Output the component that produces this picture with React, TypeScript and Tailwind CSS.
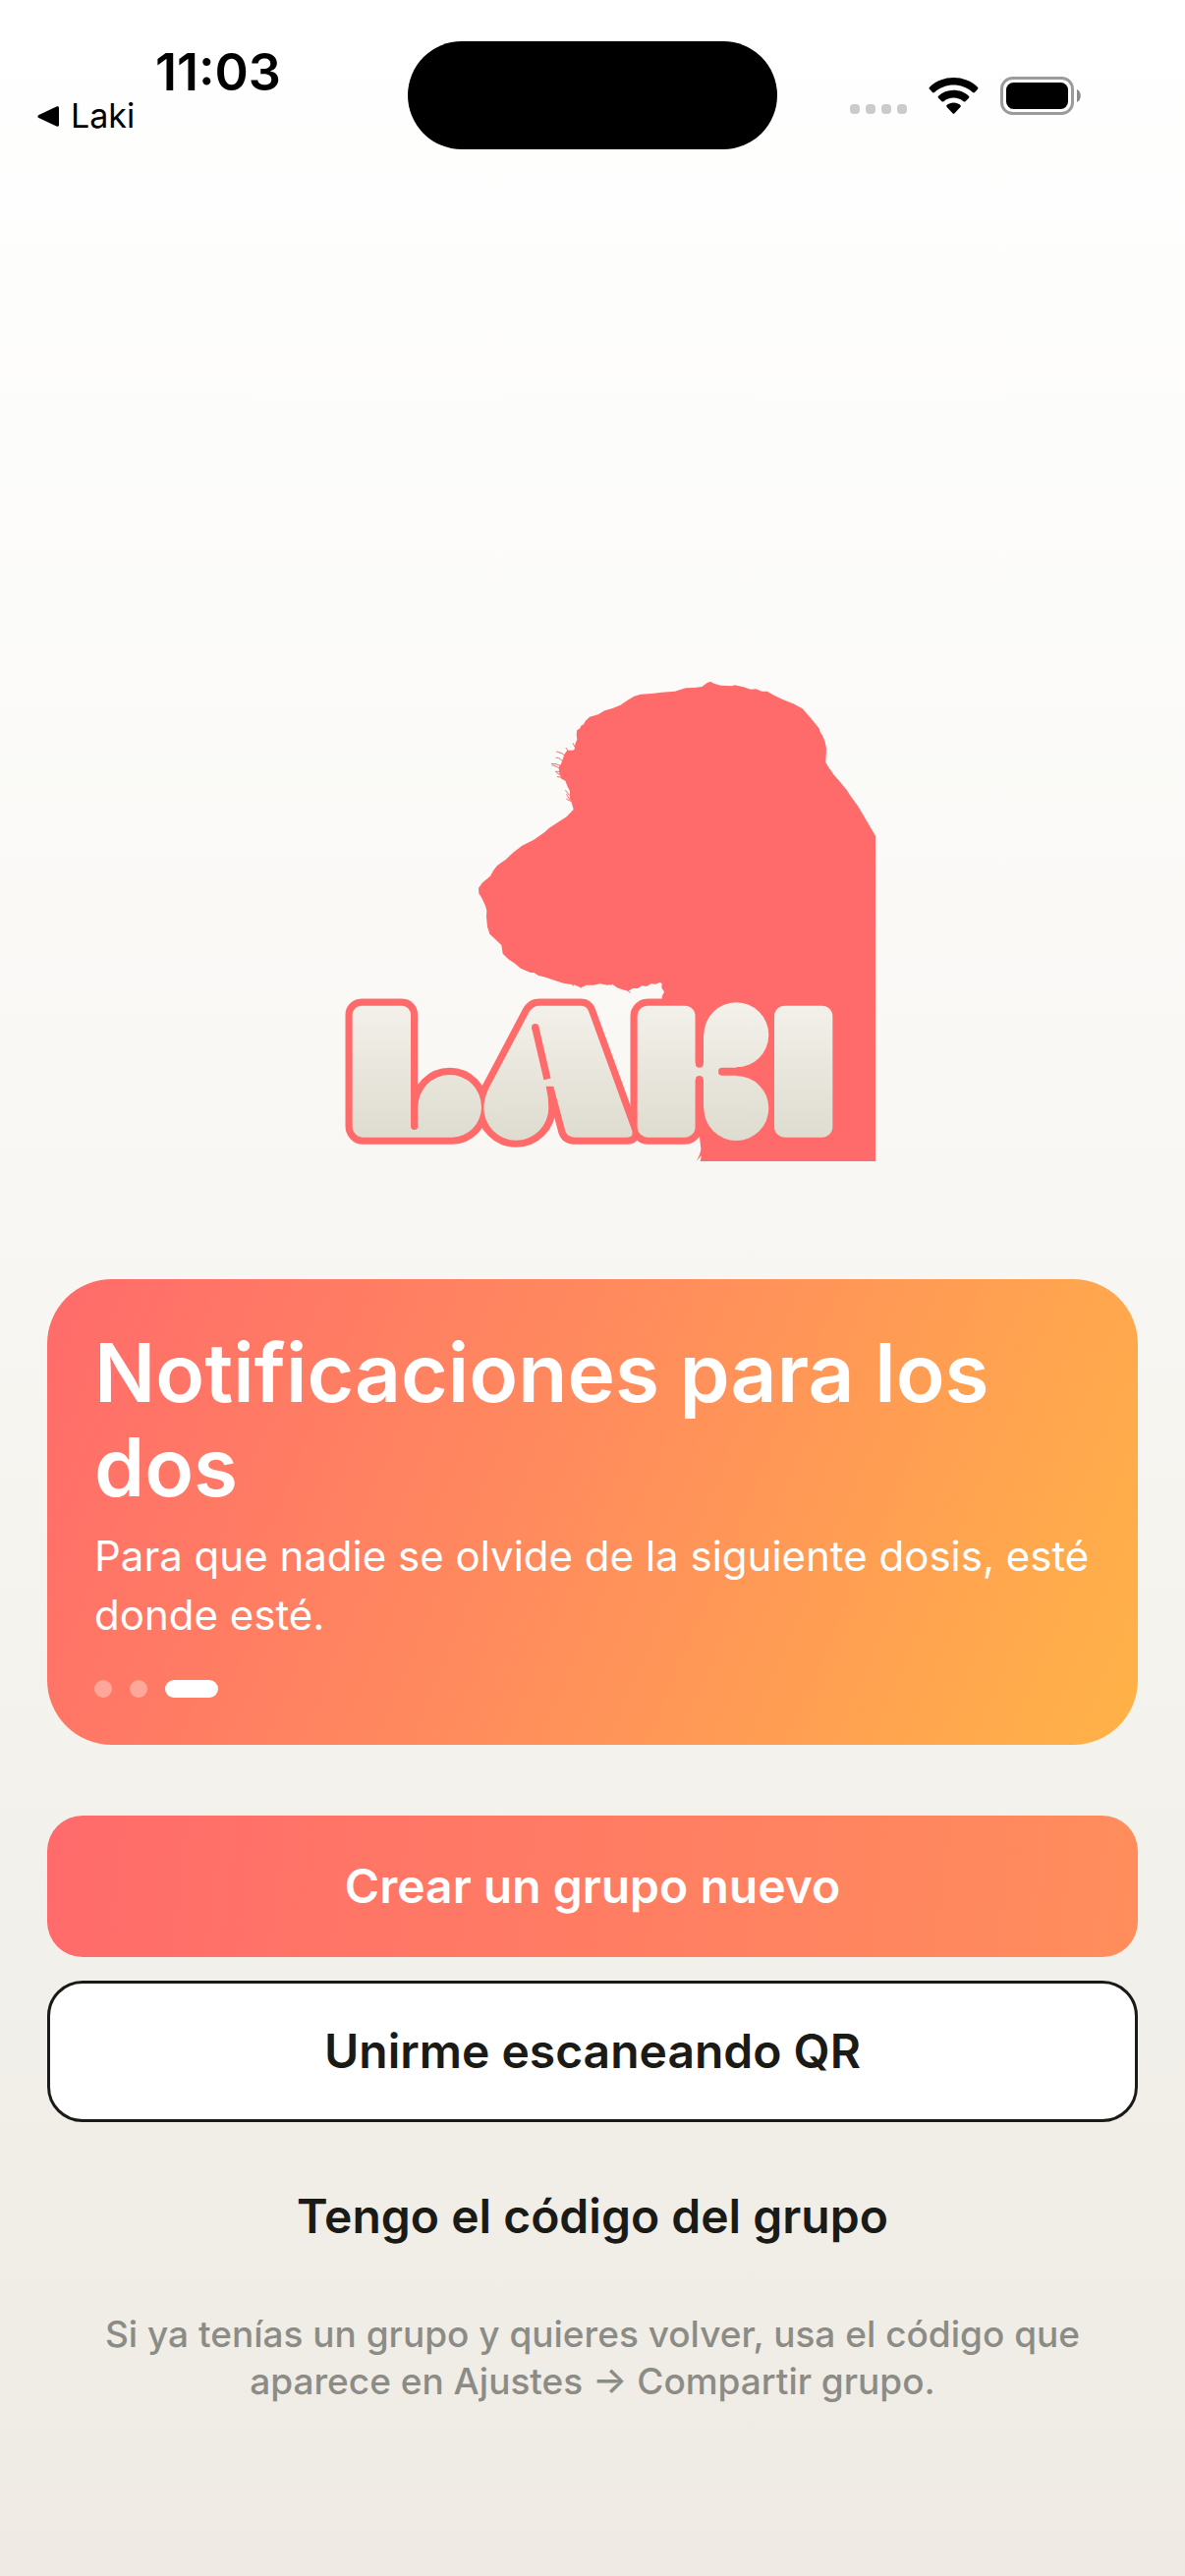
function StatusBar() {
  return (
    <header className="grid grid-cols-[1fr_376px_1fr] items-start pt-[42px] text-black">
      <div className="flex flex-col items-start pl-9">
        <time className="pl-[122px] text-[52px] leading-[64px] font-semibold">11:03</time>
        <a href="#laki" className="flex items-center gap-3 text-[34px] leading-[22px]">
          <svg className="h-6 w-6" viewBox="0 0 24 24" fill="currentColor" aria-hidden="true">
            <path d="M21.500 2.500C23 1.900 24 2.600 24 4V21C24 22.400 23 23 21.500 22.400L3.500 14C2 13.200 2 11.700 3.500 10.900Z" />
          </svg>
          Laki
        </a>
      </div>
      <div className="h-[110px] rounded-full bg-black" />
      <div className="flex items-end pt-9 pl-[74px]">
        <div className="flex gap-[6px] pb-px">
          <span className="h-[10px] w-[10px] rounded-[4px] bg-[#cbcbcb]" />
          <span className="h-[10px] w-[10px] rounded-[4px] bg-[#cbcbcb]" />
          <span className="h-[10px] w-[10px] rounded-[4px] bg-[#cbcbcb]" />
          <span className="h-[10px] w-[10px] rounded-[4px] bg-[#cbcbcb]" />
        </div>
        <svg className="ml-[22px] h-[39px] w-[51px]" viewBox="0 0 51 39" aria-hidden="true">
          <path d="M0.800 11C14 -2.200 37 -2.200 50.200 11Q50.800 12 50 12.800L47 16Q46 16.800 45 16C34 6 17 6 6 16Q5 16.800 4 16L1 12.800Q0.200 12 0.800 11Z" />
          <path d="M9.800 20C18 11.800 33 11.800 41.200 20Q41.800 21 41 21.800L37.500 25.200Q36.500 26 35.500 25.200C30 20.400 21 20.400 15.500 25.200Q14.500 26 13.500 25.200L10 21.800Q9.200 21 9.800 20Z" />
          <path d="M18.500 29C22 25.600 29 25.600 32.500 29Q33.200 30 32.400 30.900L26.500 37.200Q25.500 38.200 24.500 37.200L18.600 30.900Q17.800 30 18.500 29Z" />
        </svg>
        <svg className="ml-[22px] h-[39px] w-[82px]" viewBox="0 0 82 39" aria-hidden="true">
          <rect x="1.500" y="1.500" width="72" height="36" rx="11" fill="none" stroke="#9b9b9b" strokeWidth="3" />
          <rect x="6" y="6" width="63" height="27" rx="7.500" />
          <path d="M78 13C83 15 83 24 78 26Z" fill="#8a8a8a" />
        </svg>
      </div>
    </header>
  );
}

const L_SHAPE =
  "M114 101H238A26 28 0 0 1 264 129V469A11 11 0 0 0 286 469V410A97 98 0 0 1 480 410A90 93 0 0 1 390 503H118A32 34 0 0 1 86 469V129A28 28 0 0 1 114 101Z";
const A_SHAPE =
  "M656 101H784Q802 101 808 120L939 480Q946 503 925 503H768Q742 503 736 484L700 347H677Q685 380 685 413A99 99 0 0 1 487 413Q487 386 503 352L622 127Q634 101 656 101Z";

function LetterForms() {
  return (
    <>
      <path d={L_SHAPE} />
      <path d={A_SHAPE} />
      <rect x="956" y="101" width="177" height="402" rx="32" />
      <rect x="1374" y="101" width="178" height="402" rx="32" />
    </>
  );
}

function Logo() {
  return (
    <svg className="h-[492px] w-[576px]" viewBox="0 0 1728 1476" role="img" aria-label="Laki">
      <defs>
        <linearGradient id="stone" gradientUnits="userSpaceOnUse" x1="0" y1="90" x2="0" y2="514">
          <stop offset="0" stopColor="#f3f1ea" />
          <stop offset="1" stopColor="#dedccf" />
        </linearGradient>
      </defs>
      <g transform="translate(435 -90)" fill="#ff6b6b">
        <path d="M1293 573L1262 520L1240 482L1218 452L1205 432L1180 402L1166 386L1148 360L1141 348L1143 305L1139 286L1132 268L1124 255L1122 246L1098 216L1070 184L1042 169L1010 156L985 144L962 131L946 131L928 124L912 125L890 118L862 112L856 115L820 113L800 107L789 101L778 106L763 117L740 120L714 121L680 131L640 134L610 138L576 140L556 146L536 158L514 173L490 183L466 190L446 202L420 209L407 222L402 232L394 236L390 245L382 249L380 262L382 278L376 292L374 308L368 311L352 311L344 322L338 338L334 350L326 364L328 382L334 398L346 404L352 420L360 436L360 458L366 474L371 492L350 514L320 533L296 549L282 562L250 584L214 602L186 624L164 645L138 663L126 679L117 695L92 716L81 732L82 748L92 764L102 786L106 800L105 820L108 850L115 872L132 888L151 906L155 932L172 949L192 962L210 977L240 990L250 990L264 999L286 1004L312 1013L340 1022L360 1025L376 1028L394 1036L410 1028L432 1028L452 1024L474 1028L490 1026L504 1036L520 1042L538 1046L552 1038L568 1038L580 1030L594 1032L608 1024L622 1025L634 1020L641 1023L640 1036L648 1049L643 1058L640 1070L690 1110L700 1440H735L755 1484L760 1528Q758 1548 745 1566L762 1548L758 1566H1293Z" />
        <g fill="none" stroke="#ff6b6b" strokeWidth="3" strokeLinecap="round">
          <path d="M347 330Q338 318 320 315M338 345Q325 330 318 334M334 360Q318 350 304 352M330 368Q314 356 306 357M330 376H316M334 388L320 380M336 394L322 392M354 312L348 304M374 300L370 290M358 448L347 434M360 462L350 446M362 466L350 460M384 1026L393 1036M362 1020L370 1030M530 1040L544 1051M486 1028L478 1021" />
        </g>
      </g>
      <g transform="translate(45 900)">
        <g fill="#ff6b6b" stroke="#ff6b6b" strokeWidth="43" strokeLinejoin="round">
          <LetterForms />
        </g>
        <g fill="url(#stone)">
          <LetterForms />
          <rect x="1120" y="276" width="50" height="52" />
          <rect x="1158" y="190" width="100" height="223" />
          <circle cx="1258" cy="190" r="99" />
          <circle cx="1258" cy="414" r="99" />
        </g>
        <path d="M644 166L681 325" stroke="#ff6b6b" strokeWidth="22" fill="none" />
        <circle cx="644" cy="167" r="11" fill="#ff6b6b" />
        <g stroke="#ff6b6b" strokeWidth="24" strokeLinecap="round" fill="none">
          <path d="M1145.500 120V278M1145.500 327V474M1215 302H1340" />
        </g>
      </g>
    </svg>
  );
}

function FeatureCard() {
  return (
    <section className="rounded-[66px] bg-[linear-gradient(113deg,#ff6b6b,#ff8e5c_50%,#ffb347)] p-12 text-white">
      <h1 className="text-[82px] leading-[96px] font-semibold">Notificaciones para los dos</h1>
      <p className="mt-3 text-[42px] leading-[60px]">
        Para que nadie se olvide de la siguiente dosis, esté donde esté.
      </p>
      <div className="mt-9 flex gap-[18px]">
        <span className="h-[18px] w-[18px] rounded-full bg-white/35" />
        <span className="h-[18px] w-[18px] rounded-full bg-white/35" />
        <span className="h-[18px] w-[54px] rounded-full bg-white" />
      </div>
    </section>
  );
}

export default function App() {
  return (
    <div className="flex min-h-screen flex-col bg-[linear-gradient(180deg,#ffffff,#f9f8f5_42%,#f3f2ec_68%,#efeae4)] font-['Inter',sans-serif]">
      <StatusBar />
      <main className="flex flex-1 flex-col justify-end px-12 pb-[174px]">
        <div className="flex justify-center pb-[120px]">
          <Logo />
        </div>
        <FeatureCard />
        <div className="mt-[72px] flex flex-col gap-6 text-[48px] leading-[60px] font-semibold text-[#1a1a17]">
          <button type="button" className="h-36 rounded-[36px] bg-[linear-gradient(97deg,#ff6b6b,#ff8e5c)] text-white">
            Crear un grupo nuevo
          </button>
          <button type="button" className="h-36 rounded-[36px] border-3 border-[#1a1a17] bg-white">
            Unirme escaneando QR
          </button>
          <button type="button" className="h-36 rounded-[36px]">
            Tengo el código del grupo
          </button>
        </div>
        <p className="mt-6 px-12 text-center text-[37px] leading-[48px] font-medium text-[#8c8c87]">
          Si ya tenías un grupo y quieres volver, usa el código que aparece en Ajustes → Compartir grupo.
        </p>
      </main>
    </div>
  );
}
